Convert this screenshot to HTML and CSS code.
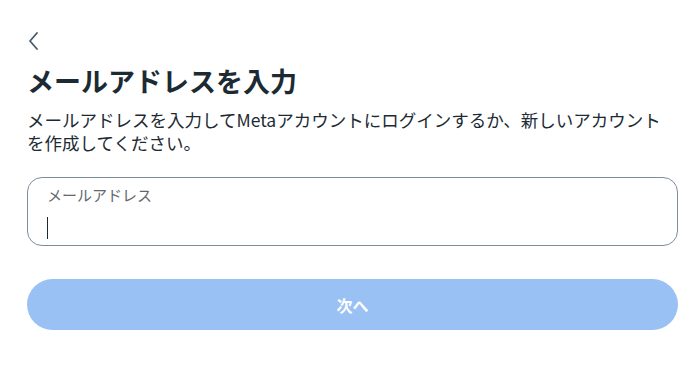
FILE: index.html
```html
<!DOCTYPE html>
<html lang="ja">
<head>
    <meta name="viewport" content="width=device-width, initial-scale=1.0">
    <link rel="stylesheet" href="styles.css">
</head>
<body>
    <div class="page">
        <!-- Back button -->
        <div class="back">
            <svg width="14" height="20" viewBox="0 0 14 20">
                <path d="M10 2 L3 10 L10 18" fill="none" stroke="#465a69" stroke-width="1.8" stroke-linecap="round" stroke-linejoin="round"/>
            </svg>
        </div>

        <h1 class="title">メールアドレスを入力</h1>
        <p class="desc">メールアドレスを入力してMetaアカウントにログインするか、新しいアカウント<br>を作成してください。</p>

        <!-- Email field -->
        <div class="field">
            <div class="field-label">メールアドレス</div>
            <div class="cursor"></div>
        </div>

        <button class="next-btn">次へ</button>
    </div>
</body>
</html>
```

FILE: styles.css
```css
body {
    margin: 0;
    background-color: white;
    color: #1c2b33;
    font-family: "Noto Sans CJK JP", "Noto Sans", sans-serif;
}

.page {
    padding: 30px 20px 0 27px;
}

/* Back button */
.back {
    height: 22px;
    display: flex;
    align-items: center;
}

.title {
    margin: 9px 0 0;
    font-size: 27px;
    line-height: 40px;
    font-weight: 700;
}

.desc {
    margin: 7px 0 0;
    font-size: 17.5px;
    line-height: 23px;
    white-space: nowrap;
}

/* Email field */
.field {
    margin-top: 23px;
    height: 69px;
    border: 1px solid #7f8c99;
    border-radius: 15px;
    padding: 6px 19px 0;
    box-sizing: border-box;
}

.field-label {
    font-size: 15px;
    line-height: 22px;
    color: #65676b;
}

.cursor {
    margin-top: 11px;
    width: 1px;
    height: 22px;
    background-color: #1c2b33;
}

.next-btn {
    display: block;
    width: 100%;
    margin-top: 33px;
    height: 51px;
    border: none;
    border-radius: 26px;
    background-color: #9ac1f4;
    color: white;
    font-family: "Noto Sans CJK JP", "Noto Sans", sans-serif;
    font-size: 16px;
    font-weight: 700;
}
```
